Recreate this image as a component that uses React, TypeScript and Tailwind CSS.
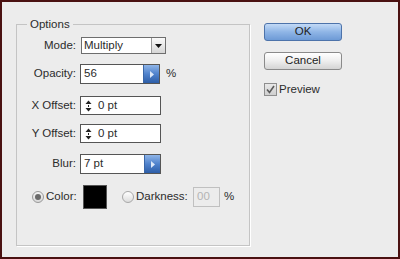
import React from "react";

const font = { fontFamily: '"Liberation Sans", Arial, sans-serif' };

function Spinner() {
  return (
    <svg width="7" height="12" viewBox="0 0 7 12" className="shrink-0">
      <path d="M3.5 0.5 L6.5 4 L0.5 4 Z" fill="#222" />
      <rect x="3" y="5" width="1" height="2" fill="#222" />
      <path d="M3.5 11.5 L6.5 8 L0.5 8 Z" fill="#222" />
    </svg>
  );
}

function BlueArrow() {
  return (
    <div className="h-full w-[16px] shrink-0 flex items-center justify-center border-l border-[#3a67a8] bg-gradient-to-b from-[#8fb5e8] via-[#4f82cc] to-[#2d5ea8]">
      <svg width="4" height="7" viewBox="0 0 4 7">
        <path d="M0 0 L4 3.5 L0 7 Z" fill="#dce8f8" />
      </svg>
    </div>
  );
}

function Label({ children }: { children: React.ReactNode }) {
  return <div className="w-[63px] pr-[4px] text-right shrink-0">{children}</div>;
}

export default function App() {
  return (
    <div
      className="w-[400px] h-[259px] border-2 border-[#4a1111] bg-[#ececec] text-[11.5px] text-[#2b2b2b] flex"
      style={font}
    >
      <fieldset className="ml-[14px] mt-[15px] w-[234px] h-[229px] border border-[#c4c4c4] shadow-[1px_1px_0_#ffffff] flex flex-col">
        <legend className="ml-[10px] px-[3px] leading-[14px]">Options</legend>

        <div className="mt-[6px] h-[17px] flex items-center">
          <Label>Mode:</Label>
          <div className="ml-[1px] w-[85px] h-full bg-white border border-[#6e6e6e] flex items-center">
            <span className="flex-1 pl-[2px] leading-none">Multiply</span>
            <div className="w-[14px] h-full border-l border-[#9a9a9a] bg-gradient-to-b from-[#fafafa] to-[#d6d6d6] flex items-center justify-center">
              <svg width="7" height="4" viewBox="0 0 7 4">
                <path d="M0 0 L7 0 L3.5 4 Z" fill="#111" />
              </svg>
            </div>
          </div>
        </div>

        <div className="mt-[10px] h-[20px] flex items-center">
          <Label>Opacity:</Label>
          <div className="w-[80px] h-full bg-white border border-[#555] flex items-center">
            <span className="flex-1 pl-[3px] leading-none">56</span>
            <BlueArrow />
          </div>
          <span className="ml-[6px]">%</span>
        </div>

        <div className="mt-[12px] h-[19px] flex items-center">
          <Label>X Offset:</Label>
          <div className="w-[81px] h-full bg-white border border-[#555] flex items-center pl-[4px] gap-[6px]">
            <Spinner />
            <span className="leading-none">0 pt</span>
          </div>
        </div>

        <div className="mt-[9px] h-[19px] flex items-center">
          <Label>Y Offset:</Label>
          <div className="w-[81px] h-full bg-white border border-[#555] flex items-center pl-[4px] gap-[6px]">
            <Spinner />
            <span className="leading-none">0 pt</span>
          </div>
        </div>

        <div className="mt-[11px] h-[20px] flex items-center">
          <Label>Blur:</Label>
          <div className="w-[81px] h-full bg-white border border-[#555] flex items-center">
            <span className="flex-1 pl-[3px] leading-none">7 pt</span>
            <BlueArrow />
          </div>
        </div>

        <div className="mt-[11px] h-[24px] flex items-center pl-[15px]">
          <div className="w-[12px] h-[12px] rounded-full border border-[#9a9a9a] bg-gradient-to-b from-[#f4f4f4] to-[#d8d8d8] flex items-center justify-center">
            <div className="w-[6px] h-[6px] rounded-full bg-[#6a6a6a]" />
          </div>
          <span className="ml-[2px] w-[37px]">Color:</span>
          <div className="w-[24px] h-[24px] bg-black border border-[#555]" />
          <div className="ml-[15px] w-[12px] h-[12px] rounded-full border border-[#a8a8a8] bg-gradient-to-b from-[#ffffff] to-[#dcdcdc]" />
          <span className="ml-[2px] w-[57px]">Darkness:</span>
          <div className="w-[27px] h-[20px] border border-[#c0c0c0] bg-[#ececec] text-[#b4b4b4] flex items-center pl-[3px] leading-none">
            00
          </div>
          <span className="ml-[4px]">%</span>
        </div>
      </fieldset>

      <div className="ml-[14px] mt-[21px] flex flex-col w-[78px]">
        <button className="h-[18px] w-[78px] rounded-[3px] border border-[#4d73aa] bg-gradient-to-b from-[#c3daf6] via-[#8fb5e6] to-[#6d9ad6] text-[#222] leading-none">
          OK
        </button>
        <button className="mt-[11px] h-[18px] w-[78px] rounded-[3px] border border-[#8a8a8a] bg-gradient-to-b from-[#ffffff] via-[#eeeeee] to-[#d4d4d4] text-[#222] leading-none">
          Cancel
        </button>
        <div className="mt-[11px] flex items-center">
          <div className="w-[13px] h-[13px] border border-[#8e8e8e] bg-gradient-to-b from-[#e8e8e8] to-[#cfcfcf] flex items-center justify-center">
            <svg width="9" height="9" viewBox="0 0 9 9">
              <path d="M1 4.5 L3.5 7.5 L8 1" fill="none" stroke="#5a5a5a" strokeWidth="1.6" />
            </svg>
          </div>
          <span className="ml-[2px]">Preview</span>
        </div>
      </div>
    </div>
  );
}
